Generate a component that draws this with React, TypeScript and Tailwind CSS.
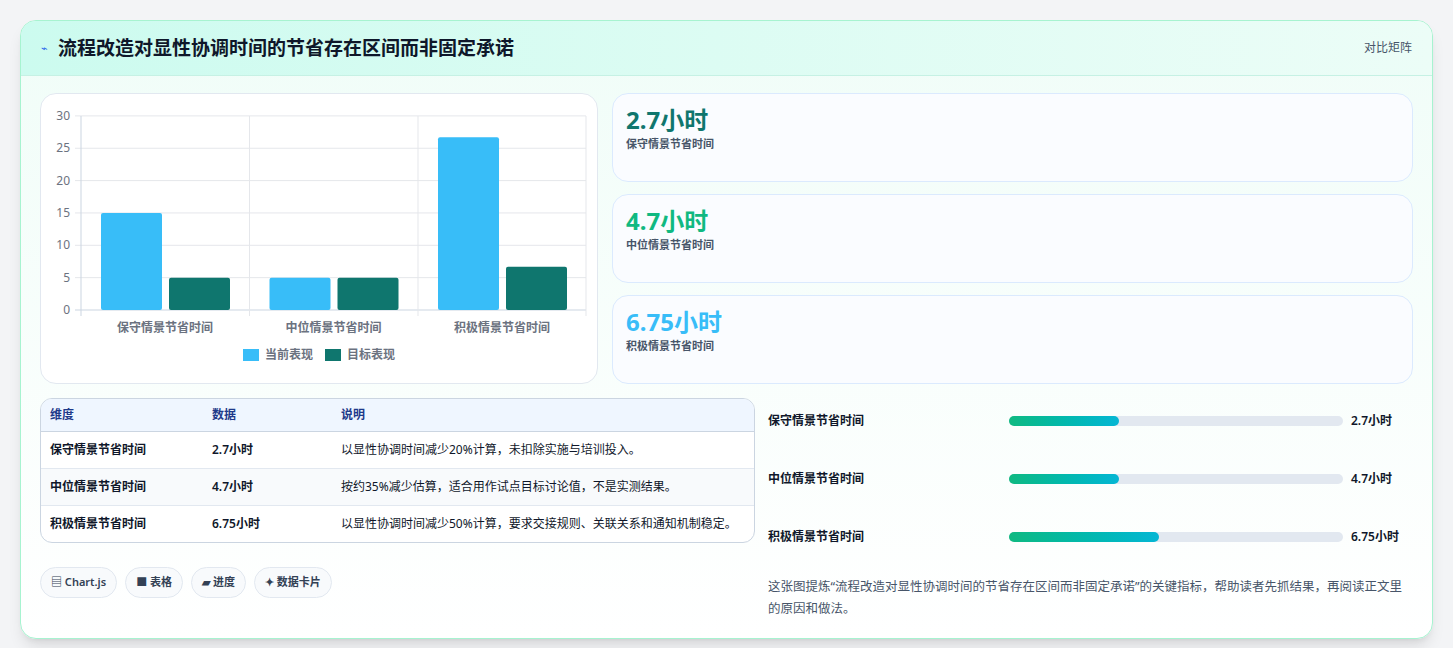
import React from "react"

const kpis = [
  { v: "2.7小时", l: "保守情景节省时间", c: "text-[#0f766e]" },
  { v: "4.7小时", l: "中位情景节省时间", c: "text-[#10b981]" },
  { v: "6.75小时", l: "积极情景节省时间", c: "text-[#38bdf8]" },
]

const rows = [
  ["保守情景节省时间", "2.7小时", "以显性协调时间减少20%计算，未扣除实施与培训投入。"],
  ["中位情景节省时间", "4.7小时", "按约35%减少估算，适合用作试点目标讨论值，不是实测结果。"],
  ["积极情景节省时间", "6.75小时", "以显性协调时间减少50%计算，要求交接规则、关联关系和通知机制稳定。"],
]

const bars = [
  { l: "保守情景节省时间", v: "2.7小时", w: 33 },
  { l: "中位情景节省时间", v: "4.7小时", w: 33 },
  { l: "积极情景节省时间", v: "6.75小时", w: 45 },
]

function Chart() {
  const y = (v: number) => 216 - v * 6.47
  const data = [
    [15, 5],
    [5, 5],
    [26.7, 6.7],
  ]
  const xs = [40, 208.5, 377, 545]
  return (
    <svg width="557" height="290" className="block">
      {[0, 5, 10, 15, 20, 25, 30].map((t) => (
        <g key={t}>
          <line x1={34} x2={545} y1={y(t)} y2={y(t)} stroke={t === 0 ? "#cbd5e1" : "#e5e7eb"} />
          <text x={29} y={y(t) + 4} textAnchor="end" fontSize="12" fill="#6b7280">{t}</text>
        </g>
      ))}
      {xs.map((x, i) => (
        <line key={i} x1={x} x2={x} y1={22} y2={222} stroke={i === 0 ? "#cbd5e1" : "#e5e7eb"} />
      ))}
      {data.map((d, i) => (
        <g key={i}>
          <rect x={xs[i] + 20} y={y(d[0])} width={61} height={216 - y(d[0])} fill="#38bdf8" rx="2" />
          <rect x={xs[i] + 88} y={y(d[1])} width={61} height={216 - y(d[1])} fill="#0f766e" rx="2" />
          <text x={xs[i] + 84} y={238} textAnchor="middle" fontSize="12" fontWeight="600" fill="#6b7280">
            {["保守情景节省时间", "中位情景节省时间", "积极情景节省时间"][i]}
          </text>
        </g>
      ))}
      <rect x={202} y={255} width={16} height={12} fill="#38bdf8" />
      <text x={224} y={265} fontSize="12" fontWeight="600" fill="#6b7280">当前表现</text>
      <rect x={284} y={255} width={16} height={12} fill="#0f766e" />
      <text x={306} y={265} fontSize="12" fontWeight="600" fill="#6b7280">目标表现</text>
    </svg>
  )
}

export default function App() {
  return (
    <div className="min-h-[648px] bg-[#f3f4f6] px-5 pt-5 pb-[22px]" style={{ fontFamily: '"Noto Sans", "Noto Sans CJK SC", sans-serif' }}>
      <div className="overflow-hidden rounded-2xl border border-[#a7f3d0] bg-gradient-to-b from-[#f0fdf8] to-white shadow-lg">
        <div className="flex h-[55px] items-center justify-between border-b border-[#c6f1e4] bg-gradient-to-r from-[#ccfbef] to-[#ecfdf7] px-5">
          <div className="flex items-center gap-2.5">
            <span className="text-[11px] text-[#2563eb]">⌁</span>
            <h1 className="text-[19px] font-bold text-[#0f172a]">流程改造对显性协调时间的节省存在区间而非固定承诺</h1>
          </div>
          <span className="text-xs text-[#475569]">对比矩阵</span>
        </div>
        <div className="px-[19px] pt-[17px] pb-[18px]">
          <div className="flex gap-[14px]">
            <div className="h-[291px] w-[558px] rounded-2xl border border-[#e2e8f0] bg-white">
              <Chart />
            </div>
            <div className="flex flex-1 flex-col gap-[12px]">
              {kpis.map((k) => (
                <div key={k.l} className="h-[89px] rounded-2xl border border-[#dbeafe] bg-[#fafcff] px-[13px] pt-[10px]">
                  <div className={`text-[24px] font-bold leading-[32px] ${k.c}`}>{k.v}</div>
                  <div className="text-[11px] font-semibold text-[#475569]">{k.l}</div>
                </div>
              ))}
            </div>
          </div>
          <div className="mt-[14px] flex gap-[13px]">
            <div className="w-[715px]">
              <div className="overflow-hidden rounded-xl border border-[#cbd5e1] bg-white text-[12px]">
                <div className="flex h-[33px] items-center border-b border-[#cbd5e1] bg-[#eff6ff] font-semibold text-[#1e3a8a]">
                  <div className="w-[171px] pl-[9px]">维度</div>
                  <div className="w-[129px]">数据</div>
                  <div className="flex-1">说明</div>
                </div>
                {rows.map((r, i) => (
                  <div key={i} className={`flex py-[9px] text-[#0f172a] ${i < 2 ? "border-b border-[#e2e8f0]" : ""} ${i === 1 ? "bg-[#f8fafc]" : ""}`}>
                    <div className="w-[171px] pl-[9px] font-semibold">{r[0]}</div>
                    <div className="w-[129px] font-semibold">{r[1]}</div>
                    <div className="flex-1 pr-4 leading-[17px]">{r[2]}</div>
                  </div>
                ))}
              </div>
              <div className="mt-6 flex gap-2 text-[11px] font-semibold text-[#334155]">
                <span className="rounded-full border border-[#e2e8f0] bg-[#f8fafc] px-2.5 py-1.5">▤ Chart.js</span>
                <span className="rounded-full border border-[#e2e8f0] bg-[#f8fafc] px-2.5 py-1.5">■ 表格</span>
                <span className="rounded-full border border-[#e2e8f0] bg-[#f8fafc] px-2.5 py-1.5">▰ 进度</span>
                <span className="rounded-full border border-[#e2e8f0] bg-[#f8fafc] px-2.5 py-1.5">✦ 数据卡片</span>
              </div>
            </div>
            <div className="flex-1 pl-[0px]">
              <div className="flex flex-col gap-[40px] pt-[14px]">
                {bars.map((b) => (
                  <div key={b.l} className="flex items-center text-[12px] font-semibold text-[#0f172a]">
                    <div className="w-[241px]">{b.l}</div>
                    <div className="h-[10px] w-[334px] rounded-full bg-[#e2e8f0]">
                      <div className="h-full rounded-full bg-gradient-to-r from-[#10b981] to-[#06b6d4]" style={{ width: `${b.w}%` }} />
                    </div>
                    <div className="pl-2">{b.v}</div>
                  </div>
                ))}
              </div>
              <p className="mt-[30px] text-[12.5px] leading-[22px] text-[#475569]">
                这张图提炼“流程改造对显性协调时间的节省存在区间而非固定承诺”的关键指标，帮助读者先抓结果，再阅读正文里的原因和做法。
              </p>
            </div>
          </div>
        </div>
      </div>
    </div>
  )
}
